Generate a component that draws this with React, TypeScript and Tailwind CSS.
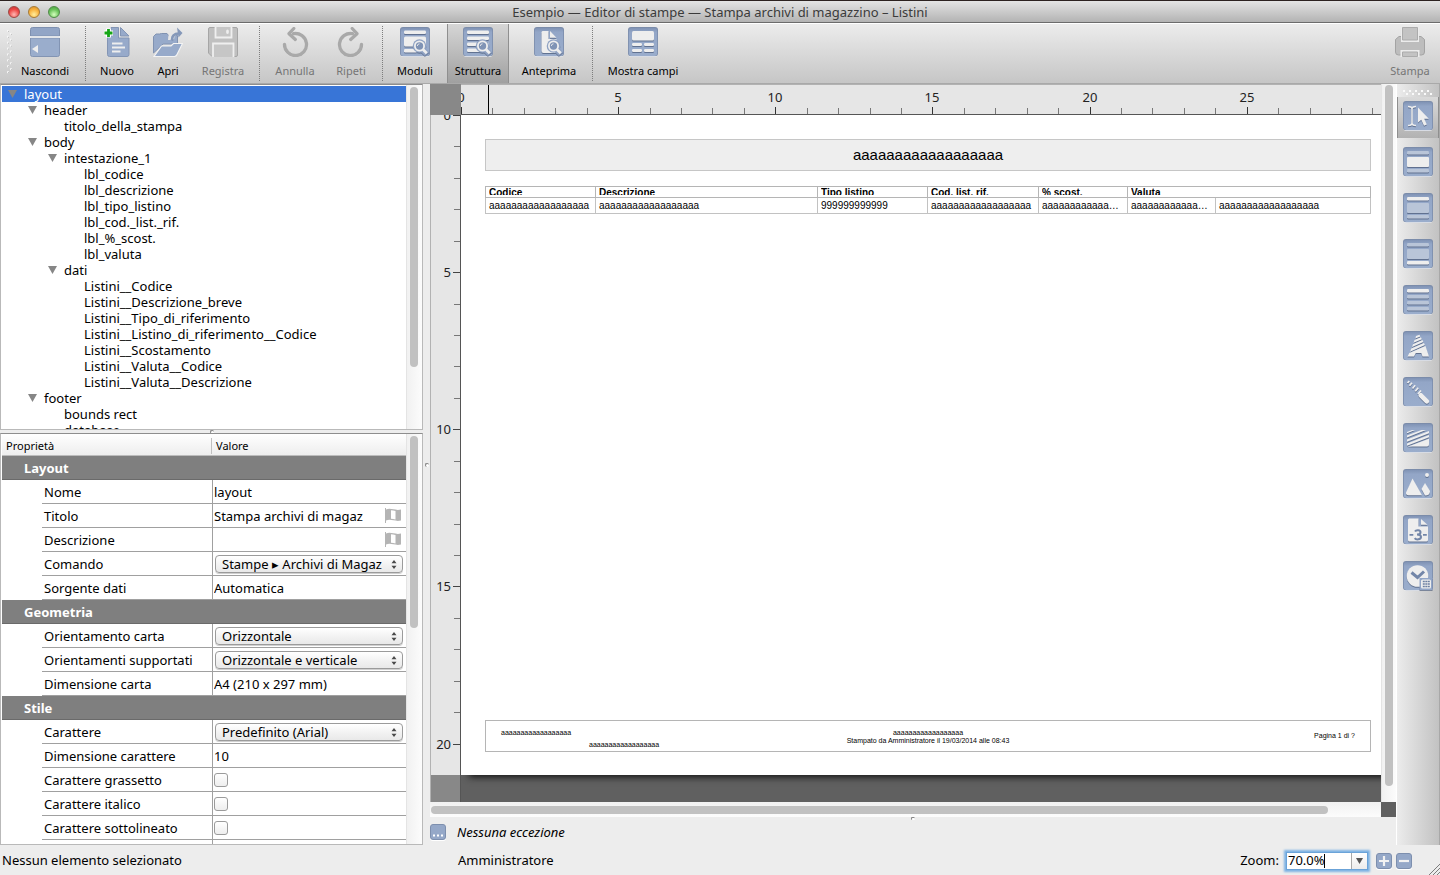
import React, { useId } from "react";
import type { ReactNode } from "react";

/* ---------- icons ---------- */

const INK = "#eeeeee";
const DIM = "#b9c5d8";

function Plate({ children }: { children: ReactNode }) {
  const id = useId();
  return (
    <svg viewBox="0 0 30 30" className="size-[30px] shrink-0" aria-hidden="true">
      <defs>
        <linearGradient id={id} x1="0" y1="0" x2="0" y2="1">
          <stop offset="0" stopColor="#8093b5" />
          <stop offset="0.15" stopColor="#93a6c7" />
          <stop offset="1" stopColor="#9aadcc" />
        </linearGradient>
      </defs>
      <rect x="0.5" y="1.5" width="29" height="28.5" rx="3" fill="#f7f7f7" />
      <rect x="0" y="0" width="30" height="29.3" rx="3" fill="#7b8caa" />
      <rect x="0.8" y="1" width="28.4" height="28" rx="2.4" fill={`url(#${id})`} />
      <g style={{ filter: "drop-shadow(0 1px 0.6px rgba(60,75,105,.6))" }}>{children}</g>
    </svg>
  );
}

const Bar = ({ y, h = 3.4, x = 4, w = 22, dim = false }: { y: number; h?: number; x?: number; w?: number; dim?: boolean }) => (
  <rect x={x} y={y} width={w} height={h} rx="1.2" fill={dim ? DIM : INK} />
);

const Lens = () => (
  <g>
    <path d="M22.5 22.5l4.5 4.5" stroke="#8fa2c3" strokeWidth="6" />
    <circle cx="19.5" cy="19" r="6.8" fill="#8fa2c3" />
    <circle cx="19.5" cy="19" r="4.6" fill="#7f93b5" stroke={INK} strokeWidth="1.8" />
    <path d="M17.3 19a2.3 2.3 0 0 1 2.2-2.2" stroke={INK} strokeWidth="0.9" fill="none" />
    <path d="M23 22.5l3.8 3.8" stroke={INK} strokeWidth="2.8" />
  </g>
);

const IconHide = () => (
  <svg viewBox="0 0 30 30" className="size-[30px]" aria-hidden="true">
    <path d="M2.5.5h25a2 2 0 0 1 2 2V9H.5V2.500a2 2 0 0 1 2-2z" fill="#92a5c6" stroke="#7e90b0" />
    <path d="M.5 11h29v16.500a2 2 0 0 1-2 2h-25a2 2 0 0 1-2-2z" fill="#9aadcc" stroke="#8294b3" />
    <path d="M0 10h30" stroke="#f7f7f7" strokeWidth="1.4" />
    <path d="M8 18v8l-6-4z" fill={INK} />
  </svg>
);

const IconNew = () => (
  <svg viewBox="0 0 30 30" className="size-[30px]" aria-hidden="true">
    <path d="M9 .5h7.500V11H27v16.500a2 2 0 0 1-2 2H7.500a2 2 0 0 1-2-2V9.500H9z" fill="#97aaca" stroke="#8395b4" />
    <path d="M18.500.5L27 9h-8.500z" fill="#97aaca" stroke="#8395b4" />
    <path d="M10 16.500h10.500M10 20.500h13M10 24.500h8.500" stroke={INK} strokeWidth="1.900" />
    <path d="M6.500 1.500v9M2 6h9" stroke="#fff" strokeWidth="5" />
    <path d="M6.500 2v8M2.500 6h8" stroke="#16a616" strokeWidth="2.800" />
  </svg>
);

const IconOpen = () => (
  <svg viewBox="0 0 30 30" className="size-[30px]" aria-hidden="true">
    <path d="M.5 26V9.500L3 7h3.500l2-.5h5.500l1.500 2h9V17H10z" fill="#97aaca" stroke="#8092b1" />
    <path d="M18 13c0-6 3-8.500 8-8.500" stroke="#e6e6e6" strokeWidth="6" fill="none" />
    <path d="M1 29.500L8.500 19H18l2.500-2.500h9L24 27.500a3 3 0 0 1-2.500 2z" fill="#97aaca" stroke="#f3f3f3" strokeWidth="1.200" />
    <path d="M19 13.500c.5-1.500-.5-3 1.500-5 1.500-1.500 3-2 5-2M20 11.500l-1.500 2" stroke="#8598b9" strokeWidth="2.600" fill="none" />
    <path d="M24 .5l5.500 5.500-4 4.500z" fill="#8598b9" />
  </svg>
);

const IconSave = () => (
  <svg viewBox="0 0 30 30" className="size-[30px]" aria-hidden="true">
    <path d="M2 .5h26a1.500 1.500 0 0 1 1.500 1.500v26a1.500 1.500 0 0 1-1.500 1.500H4L.5 26V2A1.500 1.500 0 0 1 2 .5z" fill="#c0c0c0" stroke="#a6a6a6" />
    <path d="M7.500 0v10.500h16V0M5 30V16.500h20.500V30" fill="#c6c6c6" stroke="#efefef" strokeWidth="1.800" />
    <ellipse cx="19.500" cy="4.800" rx="1.400" ry="2.200" fill="#efefef" />
  </svg>
);

const IconRotate = ({ flip = false }: { flip?: boolean }) => (
  <svg viewBox="0 0 30 30" className="size-[30px]" aria-hidden="true">
    <g transform={flip ? "translate(30 0) scale(-1 1)" : undefined}>
      <path d="M4.500 18.500a11 11 0 1 0 9-11.800" stroke="#f2f2f2" strokeWidth="3.400" fill="none" strokeLinecap="round" />
      <path d="M4.500 17.500a11 11 0 1 0 9-10.800" stroke="#a9a9a9" strokeWidth="3.400" fill="none" strokeLinecap="round" />
      <path d="M13.800 1.500L9 6.700l6.300 5.800" stroke="#a9a9a9" strokeWidth="3.200" fill="none" strokeLinejoin="round" strokeLinecap="round" />
    </g>
  </svg>
);

const IconPrint = () => (
  <svg viewBox="0 0 30 30" className="size-[30px]" aria-hidden="true">
    <path d="M4 9.500h22l3.500 3V25a3 3 0 0 1-3 3h-23a3 3 0 0 1-3-3V12.500z" fill="#bdbdbd" stroke="#a3a3a3" />
    <path d="M6 0h18v15H6z" fill="#ececec" />
    <path d="M7.500.5h15V13h-15z" fill="#c3c3c3" stroke="#ababab" />
    <path d="M5.500 23h19v7h-19z" fill="#ececec" />
    <path d="M7.500 25h15v4.500h-15z" fill="#c3c3c3" stroke="#ababab" />
  </svg>
);

const IconForms = () => (
  <Plate>
    <Bar y={3.500} />
    <rect x="4" y="9.500" width="22" height="10" rx="1.500" fill={INK} />
    <Bar y={22} w={13} />
    <Lens />
  </Plate>
);

const IconStructure = () => (
  <Plate>
    <Bar y={3.500} />
    <Bar y={9.500} />
    <Bar y={15.500} />
    <Bar y={21.500} w={13} />
    <Lens />
  </Plate>
);

const IconPreview = () => (
  <Plate>
    <path d="M8.500 4h6v8h8v12a2 2 0 0 1-2 2h-11a2 2 0 0 1-2-2V5z" fill={INK} />
    <path d="M16 4l6.500 6.800H16z" fill={INK} />
    <Lens />
  </Plate>
);

const IconFields = () => (
  <Plate>
    <rect x="4" y="4" width="22" height="9.500" rx="1.500" fill={INK} />
    <Bar y={16} w={10} h={3} />
    <Bar y={16} x={16} w={10} h={3} />
    <Bar y={22} w={10} h={3} />
    <Bar y={22} x={16} w={10} h={3} />
  </Plate>
);

const IconPointer = () => (
  <Plate>
    <path d="M5 5.500c2 0 4 .3 4 2.500 0-2.200 2-2.500 4-2.500M5 24.500c2 0 4-.3 4-2.500 0 2.200 2 2.500 4 2.500M9 7v16" stroke={INK} strokeWidth="1.500" fill="none" />
    <path d="M15 6.500v15l3.300-2.800 2.700 6 2.800-1.200-2.600-5.800h4.600z" fill={INK} />
  </Plate>
);

const IconBody = () => (
  <Plate>
    <Bar y={4} dim />
    <rect x="4" y="10" width="22" height="10" rx="1" fill={INK} />
    <Bar y={22} dim />
  </Plate>
);

const IconHeader = () => (
  <Plate>
    <Bar y={4} />
    <rect x="4" y="10" width="22" height="10" rx="1" fill={DIM} />
    <Bar y={22} dim />
  </Plate>
);

const IconFooter = () => (
  <Plate>
    <Bar y={4} dim />
    <rect x="4" y="10" width="22" height="10" rx="1" fill={DIM} />
    <Bar y={22} />
  </Plate>
);

const IconRows = () => (
  <Plate>
    <Bar y={4} />
    <Bar y={10} dim />
    <Bar y={16} dim />
    <Bar y={22} dim />
  </Plate>
);

const IconText = () => (
  <Plate>
    <path
      d="M13 5l3.500-1.300.8 1.800-5 2zM11.500 9l6.500-2.700.8 1.900-8.300 3.600zM10 13.300l9.500-4.200.8 2-11.300 5zM8.300 17.500l12.700-5.500.9 2.100L7 20.800zM6.300 22l16.200-7L26 25.500h-6.500L18.300 22h-5.500L11 25.500H4.500z"
      fill={INK}
    />
  </Plate>
);

const IconLine = () => (
  <Plate>
    <path d="M4.500 6l1.800-2M6.500 8.800l2.500-3M9.500 11.500l2.700-3.200M12.300 14.200l2.900-3.400M15 17l3-3.500" stroke={INK} strokeWidth="1.700" />
    <path d="M17.800 18.300l6 6" stroke={INK} strokeWidth="4.600" strokeLinecap="round" />
  </Plate>
);

const IconHatch = () => (
  <Plate>
    <path
      d="M4 9l5-2h3l-8 3.200zM4 12.500L18.500 7H23L4 14.600zM4 16.500L26 8v2.300L4 18.800zM4 20.500L26 12v2.300l-22 8.400zM8 22.500l18-6.800v5.800a2 2 0 0 1-2 2H4.500z"
      fill={INK}
    />
  </Plate>
);

const IconImage = () => (
  <Plate>
    <circle cx="24" cy="6" r="2" fill={INK} />
    <path d="M9.500 9.500l9.500 16.800H5.500A2.500 2.500 0 0 1 3 23.500z" fill={INK} />
    <path d="M22 14l5 8c0 3-1.500 4.500-5 4.500l-3.500-6.500z" fill={INK} />
  </Plate>
);

const IconPageNumber = () => (
  <Plate>
    <path d="M6 3.500h9.500v8H25V25a1.500 1.500 0 0 1-1.500 1.500h-17A1.500 1.500 0 0 1 5 25V4.500z" fill={INK} />
    <path d="M18 4l6.500 5.800H18z" fill={INK} />
    <path d="M6.500 19.800h3.800M20 19.800h3.800" stroke="#7386a8" strokeWidth="1.800" />
    <path d="M12 16.500c1-1.800 5.500-1.700 5.500.8 0 1.800-1.500 2.200-3.500 2.200 2.500 0 4 .7 4 2.600 0 2.700-5 3-6.300 1" stroke="#7386a8" strokeWidth="2" fill="none" />
  </Plate>
);

const IconClock = () => (
  <Plate>
    <circle cx="14.500" cy="15" r="10.800" fill={INK} />
    <path d="M8.500 11.500l6 5 6.500-6" stroke="#7386a8" strokeWidth="3" fill="none" />
    <rect x="16.500" y="17" width="13" height="12" fill="#93a6c7" />
    <rect x="18" y="18.500" width="10" height="9" rx="1.500" fill={INK} />
    <path d="M19.800 20.500h2M22.300 20.500h2M24.800 20.500h2M19.800 23h2M22.300 23h2M24.800 23h2M19.800 25.500h2M22.300 25.500h2M24.800 25.500h2" stroke="#6d80a2" strokeWidth="1.600" />
  </Plate>
);

const IconFlag = () => (
  <svg viewBox="0 0 16 15" className="h-[15px] w-4 shrink-0" aria-hidden="true">
    <path d="M.5 0v15" stroke="#b4b4b4" />
    <path d="M1 1.500c5-2 9 1.500 15 0v11c-6 1.500-10-2-15 0z" fill="#b4b4b4" />
    <path d="M6 2.300c1.500.1 3 .4 4.500.7v8.500c-1.500-.3-3-.7-4.500-.8z" fill="#fff" />
  </svg>
);

const Stepper = () => (
  <svg viewBox="0 0 6 9" className="pointer-events-none absolute top-[5px] right-1.5 h-[9px] w-1.5" aria-hidden="true">
    <path d="M3 0l2.500 3.300h-5zM3 9l2.500-3.300h-5z" fill="#4a4a4a" />
  </svg>
);

const Dimple = ({ className }: { className: string }) => (
  <span className={`size-1 rounded-full border-t border-l border-[#808080] bg-white ${className}`} />
);

/* ---------- title bar and toolbar ---------- */

function TitleBar() {
  return (
    <header className="flex h-[23px] shrink-0 items-center border-t border-b border-t-[#2c2220] border-b-[#6c6c6c] bg-linear-to-b from-[#e4e4e4] to-[#b3b3b3] px-2">
      <div className="flex w-20 gap-2">
        <button aria-label="Chiudi" className="size-3 rounded-full border border-[#9c4944] bg-[radial-gradient(circle_at_50%_75%,#ffb9b4,#ee4a48_55%,#c22f30)]" />
        <button aria-label="Riduci" className="size-3 rounded-full border border-[#a67a35] bg-[radial-gradient(circle_at_50%_75%,#ffee9c,#f8b23e_55%,#d28a24)]" />
        <button aria-label="Ingrandisci" className="size-3 rounded-full border border-[#4f8a48] bg-[radial-gradient(circle_at_50%_75%,#d5ffbe,#6cc45c_55%,#469d3c)]" />
      </div>
      <h1 className="flex-1 pt-0.5 text-center text-[13px] text-[#3b3b3b]">
        Esempio — Editor di stampe — Stampa archivi di magazzino – Listini
      </h1>
      <div className="w-20" />
    </header>
  );
}

function Tool({ label, icon, width, disabled = false, pressed = false }: { label: string; icon: ReactNode; width: string; disabled?: boolean; pressed?: boolean }) {
  return (
    <button
      disabled={disabled}
      aria-pressed={pressed || undefined}
      className={`flex h-full shrink-0 flex-col items-center gap-1.5 pt-[3px] ${width} ${disabled ? "text-[#757575]" : "text-black"} ${
        pressed ? "border-x border-[#8f8f8f] bg-linear-to-b from-[#d6d6d6] to-[#a0a0a0]" : ""
      }`}
    >
      {icon}
      <span className="text-[11px] leading-4 whitespace-nowrap">{label}</span>
    </button>
  );
}

const Divider = ({ width }: { width: string }) => (
  <div className={`flex h-full shrink-0 justify-center py-0.5 ${width}`}>
    <span className="border-l border-dotted border-[#7d7d7d]" />
  </div>
);

function Toolbar() {
  return (
    <div className="flex h-[61px] shrink-0 border-t border-b border-t-white border-b-[#a9a9a9] bg-linear-to-b from-[#ececec] to-[#c6c6c6]">
      <svg className="h-full w-[15px] shrink-0" viewBox="0 0 15 60" aria-hidden="true">
        {Array.from({ length: 15 }, (_, i) => (
          <rect key={i} x={i % 2 ? 10 : 7} y={6 + i * 3} width="2" height="2" fill="#f6f6f6" />
        ))}
        {Array.from({ length: 15 }, (_, i) => (
          <rect key={i} x={i % 2 ? 11 : 8} y={7 + i * 3} width="1" height="1" fill="#b5b5b5" />
        ))}
      </svg>
      <Tool label="Nascondi" icon={<IconHide />} width="w-15" />
      <Divider width="w-5" />
      <Tool label="Nuovo" icon={<IconNew />} width="w-11" />
      <Tool label="Apri" icon={<IconOpen />} width="w-[58px]" />
      <Tool label="Registra" icon={<IconSave />} width="w-13" disabled />
      <Divider width="w-5" />
      <Tool label="Annulla" icon={<IconRotate />} width="w-13" disabled />
      <Tool label="Ripeti" icon={<IconRotate flip />} width="w-15" disabled />
      <Divider width="w-0.5" />
      <Tool label="Moduli" icon={<IconForms />} width="w-16" />
      <Tool label="Struttura" icon={<IconStructure />} width="w-[62px]" pressed />
      <Tool label="Anteprima" icon={<IconPreview />} width="w-20" />
      <Divider width="w-1.5" />
      <Tool label="Mostra campi" icon={<IconFields />} width="w-24" />
      <div className="flex-1" />
      <Tool label="Stampa" icon={<IconPrint />} width="w-15" disabled />
    </div>
  );
}

/* ---------- structure tree ---------- */

const INDENT = ["pl-1.5", "pl-[26px]", "pl-[46px]", "pl-[66px]"];

const TREE: [number, string, boolean][] = [
  [0, "layout", true],
  [1, "header", true],
  [2, "titolo_della_stampa", false],
  [1, "body", true],
  [2, "intestazione_1", true],
  [3, "lbl_codice", false],
  [3, "lbl_descrizione", false],
  [3, "lbl_tipo_listino", false],
  [3, "lbl_cod._list._rif.", false],
  [3, "lbl_%_scost.", false],
  [3, "lbl_valuta", false],
  [2, "dati", true],
  [3, "Listini__Codice", false],
  [3, "Listini__Descrizione_breve", false],
  [3, "Listini__Tipo_di_riferimento", false],
  [3, "Listini__Listino_di_riferimento__Codice", false],
  [3, "Listini__Scostamento", false],
  [3, "Listini__Valuta__Codice", false],
  [3, "Listini__Valuta__Descrizione", false],
  [1, "footer", true],
  [2, "bounds rect", false],
  [2, "database", false],
];

const VerticalTrack = ({ thumb }: { thumb: string }) => (
  <div className="flex w-4 shrink-0 border-l border-[#e4e4e4] bg-linear-to-r from-[#f1f1f1] to-[#fcfcfc] pt-0.5 pl-[3px]">
    <span className={`w-2 rounded-full bg-[#c1c1c1] ${thumb}`} />
  </div>
);

function Tree() {
  return (
    <section className="flex min-h-0 flex-[346] basis-0 border border-t-[#8e8e8e] border-[#b9b9b9] bg-white pl-px">
      <ul role="tree" aria-label="Struttura" className="min-h-0 flex-1 overflow-hidden pt-px">
        {TREE.map(([depth, name, open], i) => (
          <li
            key={name}
            role="treeitem"
            aria-level={depth + 1}
            aria-selected={i === 0}
            className={`flex h-4 items-center gap-[7px] text-[13px] leading-4 ${INDENT[depth]} ${i === 0 ? "bg-[#3875d7] text-white" : ""}`}
          >
            <svg viewBox="0 0 9 8" className="h-2 w-[9px] shrink-0" aria-hidden="true">
              {open && <path d="M0 0h9L4.500 8z" fill="#868686" />}
            </svg>
            {name}
          </li>
        ))}
      </ul>
      <VerticalTrack thumb="h-[280px]" />
    </section>
  );
}

/* ---------- property sheet ---------- */

type Kind = "text" | "flag" | "select" | "check";
type Row = { label: string; kind: Kind; value?: string };

const GROUPS: { title: string; rows: Row[] }[] = [
  {
    title: "Layout",
    rows: [
      { label: "Nome", kind: "text", value: "layout" },
      { label: "Titolo", kind: "flag", value: "Stampa archivi di magaz" },
      { label: "Descrizione", kind: "flag", value: "" },
      { label: "Comando", kind: "select", value: "Stampe ▸ Archivi di Magaz" },
      { label: "Sorgente dati", kind: "text", value: "Automatica" },
    ],
  },
  {
    title: "Geometria",
    rows: [
      { label: "Orientamento carta", kind: "select", value: "Orizzontale" },
      { label: "Orientamenti supportati", kind: "select", value: "Orizzontale e verticale" },
      { label: "Dimensione carta", kind: "text", value: "A4 (210 x 297 mm)" },
    ],
  },
  {
    title: "Stile",
    rows: [
      { label: "Carattere", kind: "select", value: "Predefinito (Arial)" },
      { label: "Dimensione carattere", kind: "text", value: "10" },
      { label: "Carattere grassetto", kind: "check" },
      { label: "Carattere italico", kind: "check" },
      { label: "Carattere sottolineato", kind: "check" },
    ],
  },
];

function Editor({ id, row }: { id: string; row: Row }) {
  if (row.kind === "select") {
    return (
      <div className="relative mr-[3px] ml-0.5">
        <select
          id={id}
          className="block h-[18px] w-full appearance-none overflow-hidden rounded border border-[#9b9b9b] bg-linear-to-b from-white via-[#f3f3f3] to-[#e9e9e9] pr-4 pl-1.5 text-[13px] leading-4 shadow-[0_1px_0_#d0d0d0]"
        >
          <option>{row.value}</option>
        </select>
        <Stepper />
      </div>
    );
  }
  if (row.kind === "check") {
    return (
      <input
        id={id}
        type="checkbox"
        className="ml-px block size-[14px] appearance-none rounded-[3px] border border-[#9b9b9b] bg-linear-to-b from-white to-[#eeeeee]"
      />
    );
  }
  return (
    <div className="flex items-center pr-[5px] pl-px">
      <input id={id} defaultValue={row.value} className="h-5 min-w-0 flex-1 bg-transparent outline-none" />
      {row.kind === "flag" && (
        <button aria-label={`Traduci ${row.label}`}>
          <IconFlag />
        </button>
      )}
    </div>
  );
}

function Properties() {
  return (
    <section className="flex min-h-0 flex-[412] basis-0 border border-t-[#8e8e8e] border-[#b9b9b9] bg-white pl-px">
      <div className="min-h-0 flex-1 overflow-hidden">
        <table className="w-full table-fixed border-separate border-spacing-0 text-left text-[13px] leading-4">
          <colgroup>
            <col className="w-10" />
            <col className="w-[170px]" />
            <col />
          </colgroup>
          <thead>
            <tr className="h-[22px] bg-linear-to-b from-white to-[#ededed] text-[11px]">
              <th colSpan={2} className="border-b border-[#bcbcbc] p-0 pt-0.5 pl-1 font-normal">
                Proprietà
              </th>
              <th className="border-b border-[#bcbcbc] p-0 pt-0.5 font-normal">
                <div className="-ml-px border-l border-[#c0c0c0] pl-1">Valore</div>
              </th>
            </tr>
          </thead>
          {GROUPS.map((g) => (
            <tbody key={g.title}>
              <tr className="h-6">
                <th colSpan={3} className="border-b border-[#6a6a6a] bg-[#7f7f7f] p-0 pl-[22px] font-bold text-white">
                  {g.title}
                </th>
              </tr>
              {g.rows.map((row) => {
                const id = "p-" + row.label.toLowerCase().replace(/ /g, "-");
                return (
                  <tr key={row.label} className="h-6">
                    <td className="p-0" />
                    <th className="border-b border-[#a0a0a0] p-0 pl-0.5 font-normal whitespace-nowrap">
                      <label htmlFor={id}>{row.label}</label>
                    </th>
                    <td className="border-b border-l border-[#a0a0a0] p-0">
                      <Editor id={id} row={row} />
                    </td>
                  </tr>
                );
              })}
            </tbody>
          ))}
          <tbody>
            <tr className="h-6">
              <td />
              <td />
              <td className="border-l border-[#a0a0a0]" />
            </tr>
          </tbody>
        </table>
      </div>
      <VerticalTrack thumb="h-[192px]" />
    </section>
  );
}

/* ---------- print canvas ---------- */

const CM = 31.43;
const at = (cm: number) => Math.round(cm * CM);

function TopRuler() {
  return (
    <div className="relative h-[31px] flex-1 overflow-hidden border-t border-b border-t-[#b2b2b2] border-b-[#555] bg-[#e6e6e6]">
      {Array.from({ length: 30 }, (_, i) => (
        <span
          key={i}
          className={`absolute bottom-0 w-px ${i % 5 ? "h-1.5 bg-[#777]" : "h-[7px] bg-[#333]"}`}
          style={{ left: at(i) }}
        />
      ))}
      {[0, 5, 10, 15, 20, 25].map((n) => (
        <span key={n} className="absolute top-1 w-8 -translate-x-1/2 text-center text-[13px] leading-4 text-[#222]" style={{ left: at(n) }}>
          {n}
        </span>
      ))}
      <span className="absolute top-0 left-[27px] h-full w-px bg-black" />
    </div>
  );
}

function SideRuler() {
  return (
    <div className="relative w-[31px] shrink-0 overflow-hidden border-r border-l border-r-[#555] border-l-[#b2b2b2] bg-[#888]">
      <div className="h-[660px] bg-[#e6e6e6]" />
      {Array.from({ length: 21 }, (_, i) => (
        <span
          key={i}
          className={`absolute right-0 h-px ${i % 5 ? "w-1.5 bg-[#777]" : "w-[7px] bg-[#444]"}`}
          style={{ top: at(i) }}
        />
      ))}
      {[0, 5, 10, 15, 20].map((n) => (
        <span key={n} className="absolute right-[9px] -translate-y-1/2 text-[13px] leading-4 text-[#222]" style={{ top: at(n) }}>
          {n}
        </span>
      ))}
    </div>
  );
}

const A18 = "a".repeat(18);
const A12 = "a".repeat(12) + "…";

function Paper() {
  return (
    <div className="flex h-[660px] w-[933px] flex-col bg-white pt-6 pr-[23px] pb-[23px] pl-6 font-['Liberation_Sans',Arial,sans-serif] text-black shadow-[8px_2px_7px_0_#111]">
      <div className="flex h-8 shrink-0 items-center justify-center border border-[#c6c6c6] bg-[#eeeeee] text-[15px]">{A18}</div>
      <table className="mt-[15px] w-full table-fixed border-collapse text-left text-[10px] leading-3 whitespace-nowrap">
        <colgroup>
          <col className="w-[110px]" />
          <col className="w-[222px]" />
          <col className="w-[110px]" />
          <col className="w-[111px]" />
          <col className="w-[89px]" />
          <col className="w-[88px]" />
          <col />
        </colgroup>
        <thead>
          <tr>
            {["Codice", "Descrizione", "Tipo listino", "Cod. list. rif.", "% scost.", "Valuta"].map((h, i) => (
              <th key={h} colSpan={i === 5 ? 2 : 1} className="border border-[#b5b5b5] p-0 pb-0.5 pl-[3px]">
                <div className="h-2 overflow-hidden">{h}</div>
              </th>
            ))}
          </tr>
        </thead>
        <tbody>
          <tr className="h-4">
            {[A18, A18, "999999999999", A18, A12, A12, A18].map((v, i) => (
              <td key={i} className="border border-[#c2c2c2] p-0 pl-[3px]">
                {v}
              </td>
            ))}
          </tr>
        </tbody>
      </table>
      <div className="mt-auto grid h-8 shrink-0 grid-cols-3 border border-[#b5b5b5] text-[7px] leading-2">
        <div className="flex flex-col gap-1 pt-2 pl-[15px]">
          <span>{A18}</span>
          <span className="pl-[88px]">{A18}</span>
        </div>
        <div className="pt-2 text-center">
          <p>{A18}</p>
          <p>Stampato da Amministratore il 19/03/2014 alle 08:43</p>
        </div>
        <div className="self-center pr-[15px] text-right">Pagina 1 di ?</div>
      </div>
    </div>
  );
}

function Canvas() {
  return (
    <section className="flex min-h-0 flex-1 flex-col" aria-label="Pagina">
      <div className="flex min-h-0 flex-1">
        <div className="flex min-w-0 flex-1 flex-col">
          <div className="flex shrink-0">
            <div className="w-[31px] bg-[#888]" />
            <TopRuler />
          </div>
          <div className="flex min-h-0 flex-1">
            <SideRuler />
            <div className="min-w-0 flex-1 overflow-hidden bg-[#606060]">
              <Paper />
            </div>
          </div>
        </div>
        <div className="flex w-[15px] shrink-0 justify-center border-l border-[#e4e4e4] bg-linear-to-r from-[#f1f1f1] to-[#fcfcfc] pt-px pb-4">
          <span className="w-2 rounded-full bg-[#c1c1c1]" />
        </div>
      </div>
      <div className="flex h-[15px] shrink-0">
        <div className="flex flex-1 items-center bg-linear-to-b from-[#f1f1f1] to-[#fcfcfc] pr-[53px] pl-px">
          <span className="h-2 flex-1 rounded-full bg-[#c1c1c1]" />
        </div>
        <div className="w-[15px] bg-[#606060]" />
      </div>
    </section>
  );
}

/* ---------- element palette ---------- */

const PALETTE: [string, ReactNode][] = [
  ["Selezione", <IconPointer />],
  ["Corpo", <IconBody />],
  ["Intestazione", <IconHeader />],
  ["Piè di pagina", <IconFooter />],
  ["Righe", <IconRows />],
  ["Testo", <IconText />],
  ["Linea", <IconLine />],
  ["Rettangolo", <IconHatch />],
  ["Immagine", <IconImage />],
  ["Numero di pagina", <IconPageNumber />],
  ["Data e ora", <IconClock />],
];

function Palette() {
  return (
    <aside className="w-11 shrink-0 border-r border-l border-r-[#a8a8a8] border-l-white bg-linear-to-r from-[#ececec] to-[#c2c2c2]">
      <svg viewBox="0 0 42 13" className="h-[13px] w-full" aria-hidden="true">
        {Array.from({ length: 10 }, (_, i) => (
          <rect key={i} x={6 + i * 3} y={i % 2 ? 9 : 6} width="2" height="2" fill="#fafafa" />
        ))}
      </svg>
      <div className="flex flex-col gap-[5px]">
        {PALETTE.map(([name, icon], i) => (
          <button
            key={name}
            aria-label={name}
            className={`flex h-[41px] w-full justify-center pt-1 ${i === 0 ? "border-x border-[#8f8f8f] bg-linear-to-b from-[#dadada] to-[#b2b2b2]" : ""}`}
          >
            {icon}
          </button>
        ))}
      </div>
    </aside>
  );
}

/* ---------- bottom bars ---------- */

const SMALL = "flex size-4 shrink-0 items-center justify-center rounded-[3px] border border-[#7d8fae] bg-[#95a8c8] shadow-[0_1px_0_#fff]";

function StatusBar() {
  return (
    <footer className="flex h-[30px] shrink-0 items-center pt-px text-[13px]">
      <p className="w-[458px] pl-0.5">Nessun elemento selezionato</p>
      <p className="flex-1">Amministratore</p>
      <label htmlFor="zoom" className="pr-[7px]">
        Zoom:
      </label>
      <div className="flex h-[18px] w-[82px] items-center border border-[#6ba3d8] bg-white shadow-[0_0_2px_2px_#7db2e4]">
        <input id="zoom" defaultValue="70.0%" className="w-[38px] min-w-0 bg-transparent pl-px outline-none" />
        <span className="-ml-px h-3.5 w-px bg-black" />
        <button aria-label="Scegli zoom" className="ml-auto flex h-full w-4 items-center justify-center border-l border-[#a9a9a9] bg-linear-to-b from-white to-[#ececec]">
          <svg viewBox="0 0 7 6" className="h-1.5 w-[7px]" aria-hidden="true">
            <path d="M0 0h7L3.500 6z" fill="#555" />
          </svg>
        </button>
      </div>
      <div className="flex gap-1 pr-7 pl-2">
        <button aria-label="Ingrandisci vista" className={SMALL}>
          <svg viewBox="0 0 12 12" className="size-3" aria-hidden="true">
            <path d="M6 1v10M1 6h10" stroke="#f2f2f2" strokeWidth="2.200" />
          </svg>
        </button>
        <button aria-label="Riduci vista" className={SMALL}>
          <svg viewBox="0 0 12 12" className="size-3" aria-hidden="true">
            <path d="M1 6h10" stroke="#f2f2f2" strokeWidth="2.200" />
          </svg>
        </button>
      </div>
      <svg viewBox="0 0 12 12" className="-ml-3 size-3 self-end" aria-hidden="true">
        <path d="M1 12L12 1M5 12l7-7M9 12l3-3" stroke="#7c7c7c" strokeWidth="1" />
      </svg>
    </footer>
  );
}

export default function App() {
  return (
    <div className="flex h-screen min-h-[600px] flex-col overflow-hidden bg-[#ededed] font-['Noto_Sans','Open_Sans',sans-serif] text-black">
      <TitleBar />
      <Toolbar />
      <main className="flex min-h-0 flex-1">
        <div className="flex w-[423px] shrink-0 flex-col">
          <Tree />
          <div className="flex h-[3px] shrink-0 justify-center">
            <Dimple className="" />
          </div>
          <Properties />
        </div>
        <div className="flex w-[7px] shrink-0 items-center justify-center">
          <Dimple className="" />
        </div>
        <div className="flex min-w-0 flex-1 flex-col">
          <Canvas />
          <div className="flex h-7 shrink-0 flex-col items-center">
            <Dimple className="h-[3px]" />
            <div className="flex w-full items-center gap-[11px] pt-1">
              <button aria-label="Dettagli eccezioni" className={SMALL}>
                <svg viewBox="0 0 12 12" className="size-3" aria-hidden="true">
                  <path d="M1 9.500h2M5 9.500h2M9 9.500h2" stroke="#fff" strokeWidth="2" />
                </svg>
              </button>
              <p className="text-[13px] leading-4 italic">Nessuna eccezione</p>
            </div>
          </div>
        </div>
        <Palette />
      </main>
      <StatusBar />
    </div>
  );
}
